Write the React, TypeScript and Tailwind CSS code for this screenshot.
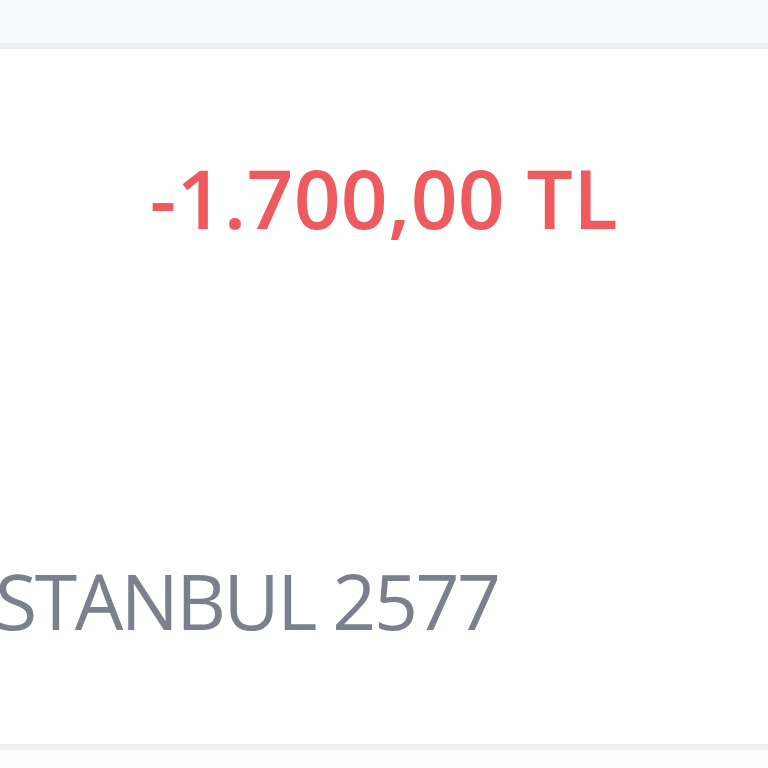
export default function App() {
  return (
    <div className="w-[768px] h-[768px] overflow-hidden bg-white flex flex-col" style={{ fontFamily: '"Open Sans", "Noto Sans", sans-serif' }}>
      <div className="h-[43px] bg-[#f9fafb] shrink-0" />
      <div className="h-[6px] bg-[#eceef1] shrink-0" />
      <div className="flex-1 flex flex-col">
        <div className="pt-[98px] flex justify-center">
          <span className="text-[#ee5b5f] font-semibold text-[82px] leading-[100px] tracking-[0.3px]">-1.700,00 TL</span>
        </div>
        <div className="mt-[304px] flex">
          <span className="text-[#7b808c] font-normal text-[77px] leading-[100px] tracking-[-2.5px] ml-[-5px] whitespace-nowrap">STANBUL 2577</span>
        </div>
      </div>
      <div className="h-[6px] bg-[#eeeeee] shrink-0" />
      <div className="h-[18px] bg-[#fcfcfc] shrink-0" />
    </div>
  );
}
